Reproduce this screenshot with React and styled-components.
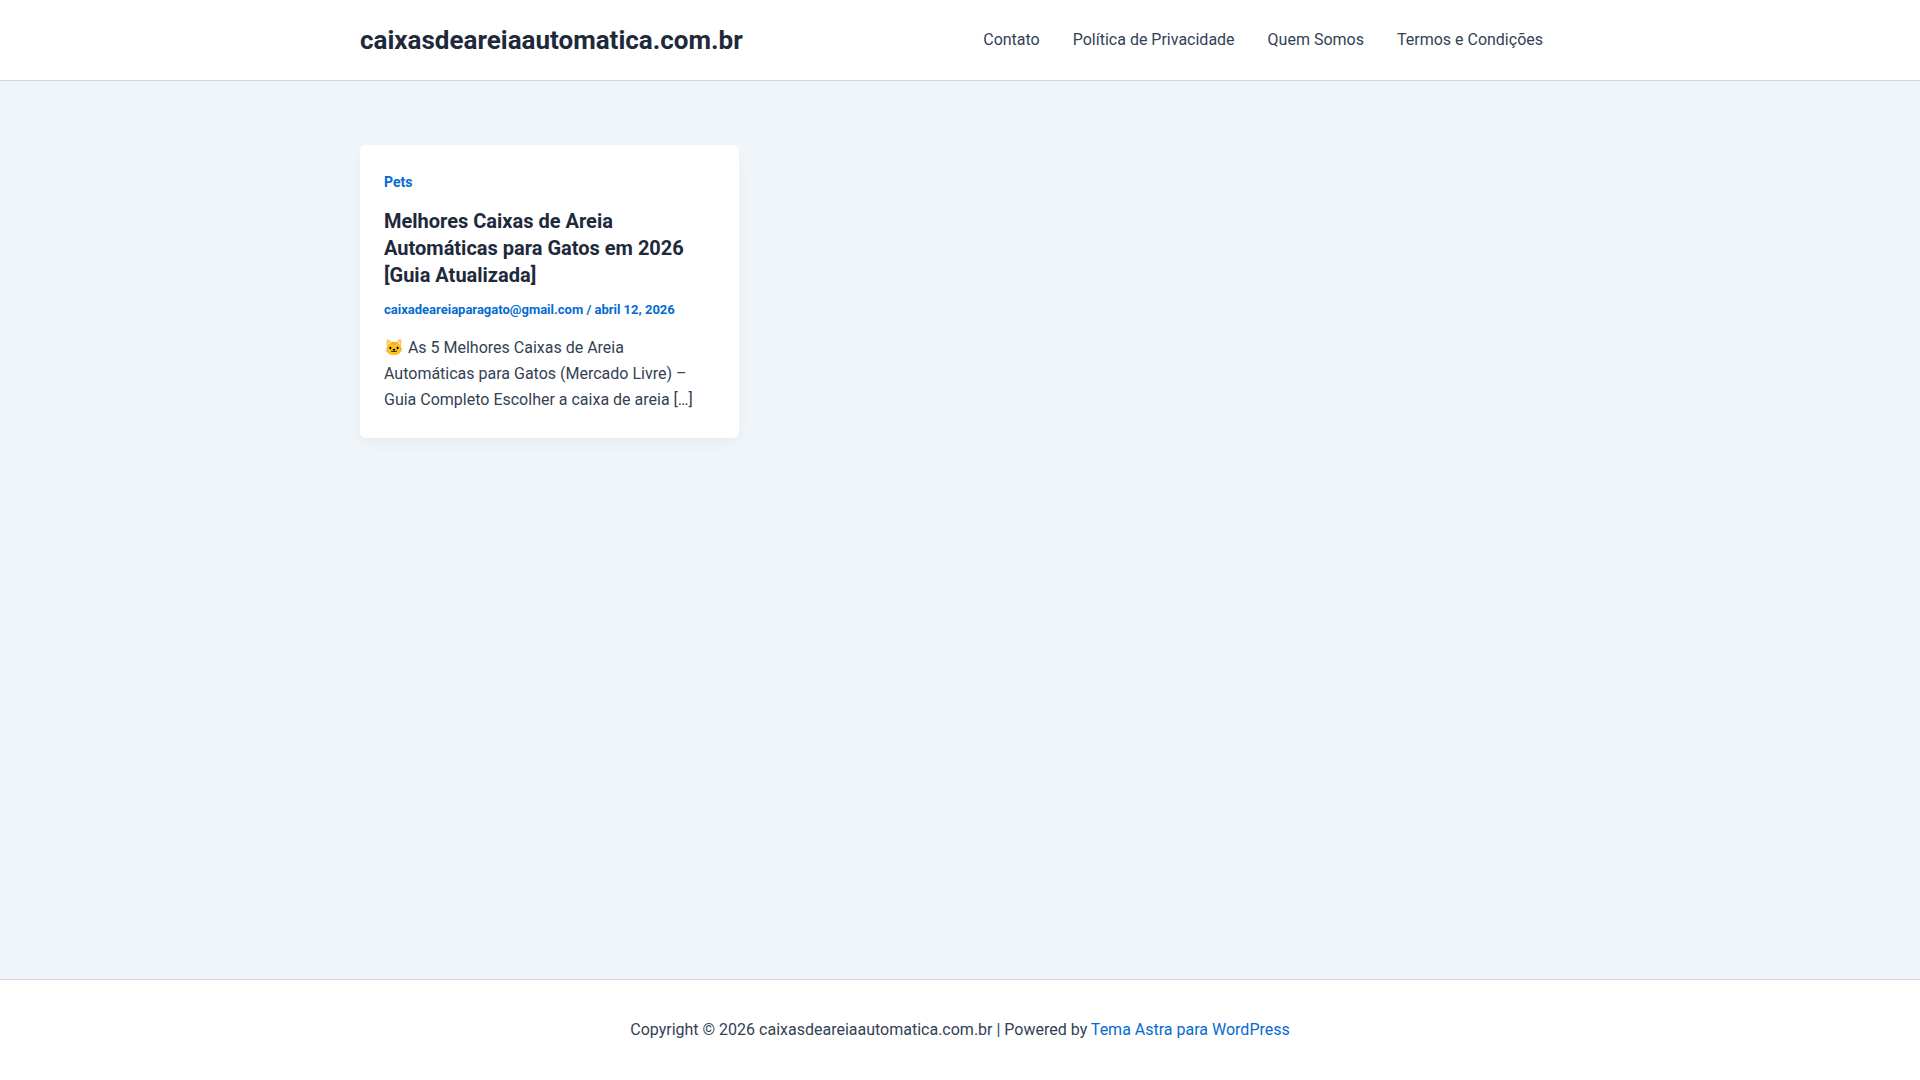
import React from 'react'
import styled, { createGlobalStyle } from 'styled-components'

const GlobalStyle = createGlobalStyle`
*, *::before, *::after {
  box-sizing: border-box;
}
body {
  margin: 0;
  background: #f0f5fa;
  color: #334155;
  font-family: Roboto, "Noto Color Emoji", sans-serif;
  font-size: 16px;
  line-height: 26px;
}
a {
  color: #046bd2;
  text-decoration: none;
}
`;

const Page = styled.div`
display: flex;
flex-direction: column;
min-height: 100vh;
`;

const Container = styled.div`
width: 100%;
max-width: 1240px;
margin: 0 auto;
padding: 0 20px;
`;

const Header = styled.header`
background: #fff;
border-bottom: 1px solid #d1d5db;
`;

const HeaderRow = styled(Container)`
display: flex;
justify-content: space-between;
align-items: center;
min-height: 80px;
`;

const SiteTitle = styled.p`
margin: 0;
font-size: 26px;
font-weight: 700;
line-height: 31px;

a {
  color: #1e293b;
}
`;

const Menu = styled.ul`
display: flex;
gap: 33px;
margin: 0;
padding: 0 17px;
list-style: none;
`;

const MenuLink = styled.a`
color: #334155;
`;

const Main = styled.main`
flex: 1;
padding: 64px 0;
`;

const Posts = styled(Container)`
display: grid;
grid-template-columns: repeat(3, 1fr);
gap: 32px;
`;

const Card = styled.article`
padding: 24px;
background: #fff;
border-radius: 6px;
box-shadow: 0 6px 15px -2px rgba(16, 24, 40, 0.05);
`;

const Category = styled.a`
display: block;
margin-bottom: 13px;
font-size: 14px;
font-weight: 700;
`;

const PostTitle = styled.h2`
margin: 0 0 8px;
font-size: 20px;
font-weight: 700;
line-height: 27px;

a {
  color: #1e293b;
}
`;

const Meta = styled.div`
margin-bottom: 12px;
color: #046bd2;
font-size: 13px;
font-weight: 700;
`;

const Excerpt = styled.p`
margin: 0;
padding-bottom: 1px;
`;

const Footer = styled.footer`
padding: 37px 0;
background: #fff;
border-top: 1px solid #d1d5db;
`;

const Copyright = styled.p`
margin: 0;
padding: 0 20px;
text-align: center;
`;

const pages = ['Contato', 'Política de Privacidade', 'Quem Somos', 'Termos e Condições']

function App() {
  return (<>
    <GlobalStyle />
    <Page>
      <Header>
        <HeaderRow>
          <SiteTitle><a href="#">caixasdeareiaautomatica.com.br</a></SiteTitle>
          <nav>
            <Menu>
              {pages.map((page) => (
                <li key={page}><MenuLink href="#">{page}</MenuLink></li>
              ))}
            </Menu>
          </nav>
        </HeaderRow>
      </Header>
      <Main>
        <Posts>
          <Card>
            <Category href="#">Pets</Category>
            <PostTitle>
              <a href="#">Melhores Caixas de Areia Automáticas para Gatos em 2026 [Guia Atualizada]</a>
            </PostTitle>
            <Meta>
              <a href="#">caixadeareiaparagato@gmail.com</a> / abril 12, 2026
            </Meta>
            <Excerpt>
              🐱 As 5 Melhores Caixas de Areia Automáticas para Gatos (Mercado Livre) – Guia Completo Escolher a caixa de areia […]
            </Excerpt>
          </Card>
        </Posts>
      </Main>
      <Footer>
        <Copyright>
          Copyright © 2026 caixasdeareiaautomatica.com.br | Powered by <a href="#">Tema Astra para WordPress</a>
        </Copyright>
      </Footer>
    </Page>
  </>)
}

export default App
